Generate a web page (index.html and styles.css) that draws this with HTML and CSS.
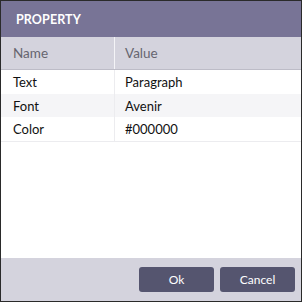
FILE: index.html
```html
<!DOCTYPE html>
<html lang="en">
<head>
    <meta charset="UTF-8">
    <meta name="viewport" content="width=device-width, initial-scale=1.0">
    <title>Property</title>
    <link rel="stylesheet" href="styles.css">
</head>
<body>
    <div class="dialog">
        <div class="dialog-title">PROPERTY</div>
        <div class="props">
            <div class="props-row props-head">
                <div class="cell key">Name</div>
                <div class="cell">Value</div>
            </div>
            <div class="props-row">
                <div class="cell key">Text</div>
                <div class="cell">Paragraph</div>
            </div>
            <div class="props-row alt">
                <div class="cell key">Font</div>
                <div class="cell">Avenir</div>
            </div>
            <div class="props-row last">
                <div class="cell key">Color</div>
                <div class="cell">#000000</div>
            </div>
        </div>
        <div class="dialog-footer">
            <button class="btn">Ok</button>
            <button class="btn">Cancel</button>
        </div>
    </div>
</body>
</html>
```

FILE: styles.css
```css
 body {
     margin: 0;
     background-color: #fff;
     font-family: Lato, "Noto Sans", sans-serif;
 }

 .dialog {
     box-sizing: border-box;
     width: 302px;
     height: 302px;
     border: 1px solid #2a2a2a;
     display: flex;
     flex-direction: column;
     background-color: #fff;
 }

 .dialog-title {
     height: 36px;
     display: flex;
     align-items: center;
     padding-left: 15px;
     background-color: #787496;
     color: #fff;
     font-size: 12.5px;
     font-weight: bold;
     letter-spacing: 0.1px;
 }

 .props {
     flex: 1;
 }

 .props-row {
     display: grid;
     grid-template-columns: 114px 1fr;
     height: 23.7px;
     font-size: 13px;
     color: #111;
 }

 .props-row.alt {
     background-color: #f5f5f7;
 }

 .props-row.last {
     border-bottom: 1px solid #ececef;
 }

 .cell {
     display: flex;
     align-items: center;
     padding-left: 10px;
 }

 .cell.key {
     padding-left: 12px;
     border-right: 1px solid #ececef;
 }

 .props-head {
     height: 32px;
     background-color: #d4d3dd;
     border-bottom: 1px solid #bdbcc7;
     color: #66656f;
     font-size: 13.5px;
 }

 .props-head .cell.key {
     border-right-color: #f4f4f7;
 }

 .dialog-footer {
     height: 43px;
     background-color: #d4d3dd;
     display: flex;
     justify-content: flex-end;
     align-items: center;
     gap: 6px;
     padding-right: 6px;
 }

 .btn {
     width: 75px;
     height: 25px;
     border: none;
     border-radius: 3px;
     background-color: #55556f;
     color: #fff;
     font-family: Lato, "Noto Sans", sans-serif;
     font-size: 12px;
     padding: 0;
 }
```
